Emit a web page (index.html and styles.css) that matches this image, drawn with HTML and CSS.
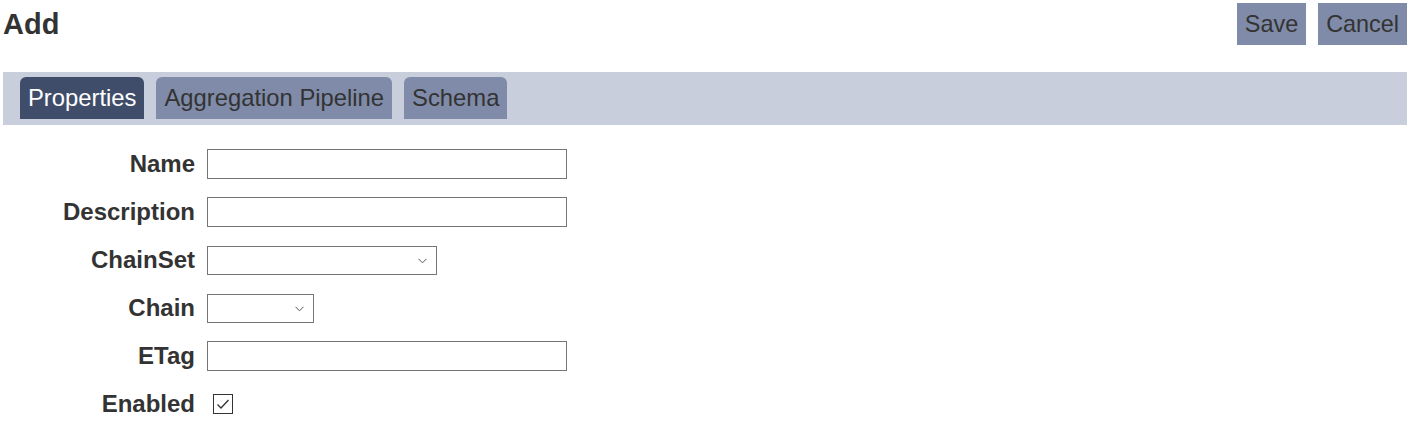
FILE: index.html
```html
<!DOCTYPE html>
<html lang="en">
<head>
  <meta charset="UTF-8" />
  <title>Add</title>
  <link rel="stylesheet" href="styles.css">
</head>
<body>

<div class="header">
  <h1>Add</h1>
  <div class="actions">
    <button class="btn">Save</button>
    <button class="btn">Cancel</button>
  </div>
</div>

<div class="tabs">
  <div class="tab active">Properties</div>
  <div class="tab">Aggregation Pipeline</div>
  <div class="tab">Schema</div>
</div>

<div class="form">
  <label>Name</label>
  <input type="text" class="wide" />

  <label>Description</label>
  <input type="text" class="wide" />

  <label>ChainSet</label>
  <span class="select-wrap">
    <select class="chainset"><option></option></select>
    <svg class="chevron" width="9" height="6" viewBox="0 0 9 6"><path d="M0.5 0.8 L4.5 4.8 L8.5 0.8" fill="none" stroke="#555" stroke-width="1" /></svg>
  </span>

  <label>Chain</label>
  <span class="select-wrap">
    <select class="chain"><option></option></select>
    <svg class="chevron" width="9" height="6" viewBox="0 0 9 6"><path d="M0.5 0.8 L4.5 4.8 L8.5 0.8" fill="none" stroke="#555" stroke-width="1" /></svg>
  </span>

  <label>ETag</label>
  <input type="text" class="wide" />

  <label>Enabled</label>
  <span class="check">
    <svg width="20" height="20" viewBox="0 0 20 20">
      <rect x="0.5" y="0.5" width="19" height="19" fill="#fff" stroke="#333" />
      <path d="M4.5 10.5 L8 14 L15.5 6" fill="none" stroke="#333" stroke-width="1.3" />
    </svg>
  </span>
</div>

</body>
</html>
```

FILE: styles.css
```css
* { box-sizing: border-box; }

body {
  font-family: "Liberation Sans", Arial, sans-serif;
  color: #333;
  margin: 0;
  padding: 3px 6px 0 3px;
  background: #fff;
}

.header {
  display: flex;
  justify-content: space-between;
  align-items: center;
  height: 42px;
}

h1 {
  font-size: 29px;
  font-weight: bold;
  margin: 0;
  line-height: 1;
}

.actions {
  display: flex;
  gap: 12px;
}

.btn {
  font-family: inherit;
  font-size: 23.4px;
  color: #333;
  background: #7f8ba8;
  border: none;
  border-radius: 0;
  height: 42px;
  padding: 0 8px;
}

.tabs {
  display: flex;
  gap: 12px;
  margin-top: 27px;
  background: #c8cedb;
  padding: 5px 17px 6px;
}

.tab {
  font-size: 23.8px;
  height: 42px;
  line-height: 42px;
  padding: 0 8px;
  background: #7f8ba8;
  color: #333;
  border-radius: 6px 6px 0 0;
}

.tab.active {
  background: #3f4d6a;
  color: #fff;
}

.form {
  display: grid;
  grid-template-columns: 192px auto;
  grid-auto-rows: 30px;
  column-gap: 12px;
  row-gap: 18px;
  margin-top: 24px;
  align-items: center;
  justify-items: start;
}

.form label {
  justify-self: end;
  font-weight: bold;
  font-size: 24px;
}

.form input[type="text"] {
  height: 30px;
  border: 1px solid #767676;
  border-radius: 0;
  font-family: inherit;
  font-size: 16px;
}

.form .wide { width: 360px; }

.select-wrap {
  position: relative;
  display: block;
  height: 29px;
}

.form select {
  appearance: none;
  -webkit-appearance: none;
  height: 29px;
  border: 1px solid #767676;
  border-radius: 0;
  background: #fff;
  font-family: inherit;
  font-size: 16px;
}

.chevron {
  position: absolute;
  right: 10px;
  top: 12px;
  pointer-events: none;
}

.form .chainset { width: 230px; }
.form .chain { width: 107px; }

.check {
  display: block;
  margin-left: 6px;
  height: 20px;
}
```
